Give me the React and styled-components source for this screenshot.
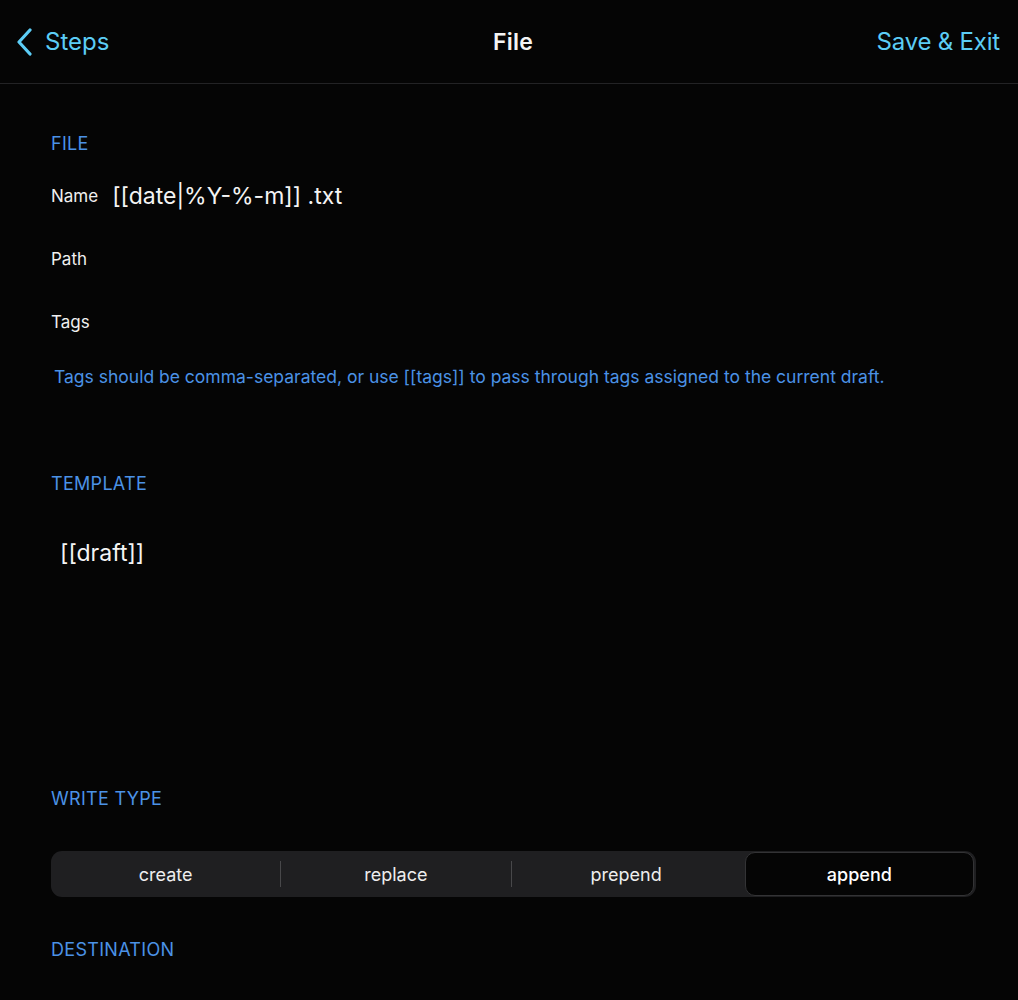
import React, { useState } from 'react'
import styled, { createGlobalStyle } from 'styled-components'

const GlobalStyle = createGlobalStyle`
  html, body {
    margin: 0;
    padding: 0;
    background: #050505;
  }
  body {
    font-family: Inter, "Noto Sans", "Liberation Sans", sans-serif;
    color: #f2f2f2;
  }
`

const Page = styled.div`
  width: 1018px;
  height: 1000px;
  background: #050505;
  overflow: hidden;
`

const NavBar = styled.div`
  height: 83px;
  border-bottom: 1px solid #232325;
  display: grid;
  grid-template-columns: 1fr auto 1fr;
  align-items: center;
  padding: 0 18px 0 16px;
`

const BackButton = styled.div`
  display: flex;
  align-items: center;
  gap: 11px;
  color: #5ccdf6;
  font-size: 24px;
`

const NavTitle = styled.div`
  font-size: 23px;
  font-weight: 600;
  color: #f4f4f4;
  letter-spacing: 0.2px;
  margin-left: 10px;
`

const NavAction = styled.div`
  justify-self: end;
  color: #5ccdf6;
  font-size: 24px;
  letter-spacing: -0.2px;
`

const Content = styled.div`
  padding: 50px 42px 0 51px;
`

const SectionLabel = styled.div`
  font-size: 18px;
  line-height: 20px;
  color: #4b92e6;
  letter-spacing: 0.3px;
  margin-top: ${({ gap }) => gap || 0}px;
`

const FieldRow = styled.div`
  height: 63px;
  display: flex;
  align-items: center;
  gap: 14px;
  margin-top: ${({ first }) => (first ? 10 : 0)}px;
`

const FieldLabel = styled.span`
  font-size: 17px;
  color: #f0f0f0;
`

const FieldValue = styled.span`
  font-size: 23px;
  color: #f4f4f4;
`

const HelpText = styled.div`
  font-size: 17.5px;
  line-height: 20px;
  color: #4b92e6;
  margin: 14px 0 0 3px;
  white-space: nowrap;
`

const TemplateBody = styled.div`
  font-size: 23px;
  line-height: 28px;
  color: #f4f4f4;
  margin: 45px 0 0 9px;
  height: 250px;
`

const Segmented = styled.div`
  margin-top: 42px;
  height: 46px;
  border-radius: 11px;
  background: #1f1f21;
  display: flex;
  align-items: stretch;
  padding: 1px 2px 1px 0;
  box-sizing: border-box;
`

const Segment = styled.div`
  flex: 1 1 0;
  display: flex;
  align-items: stretch;
  padding-left: ${({ active }) => (active ? 4 : 0)}px;
  cursor: pointer;
`

const SegmentPill = styled.div`
  flex: 1;
  display: flex;
  align-items: center;
  justify-content: center;
  font-size: 18px;
  color: #eeeeee;
  border-radius: 10px;
  ${({ active }) =>
    active &&
    `
    background: #050505;
    border: 1.5px solid #333335;
    font-weight: 500;
    color: #ffffff;
  `}
`

const Divider = styled.div`
  width: 1px;
  margin: 9px 0;
  background: ${({ hidden }) => (hidden ? 'transparent' : '#48484a')};
`

const Chevron = () => (
  <svg width="18" height="28" viewBox="0 0 18 28">
    <path d="M14 2 L3 14 L14 26" fill="none" stroke="#5ccdf6" strokeWidth="3.2" strokeLinecap="round" strokeLinejoin="round" />
  </svg>
)

const types = ['create', 'replace', 'prepend', 'append']

export default function App() {
  const [active, setActive] = useState('append')
  const activeIndex = types.indexOf(active)
  return (
    <Page>
      <GlobalStyle />
      <NavBar>
        <BackButton>
          <Chevron />
          Steps
        </BackButton>
        <NavTitle>File</NavTitle>
        <NavAction>Save &amp; Exit</NavAction>
      </NavBar>
      <Content>
        <SectionLabel>FILE</SectionLabel>
        <FieldRow first>
          <FieldLabel>Name</FieldLabel>
          <FieldValue>[[date|%Y-%-m]] .txt</FieldValue>
        </FieldRow>
        <FieldRow>
          <FieldLabel>Path</FieldLabel>
        </FieldRow>
        <FieldRow>
          <FieldLabel>Tags</FieldLabel>
        </FieldRow>
        <HelpText>
          Tags should be comma-separated, or use [[tags]] to pass through tags assigned to the current draft.
        </HelpText>

        <SectionLabel gap={87}>TEMPLATE</SectionLabel>
        <TemplateBody>[[draft]]</TemplateBody>

        <SectionLabel>WRITE TYPE</SectionLabel>
        <Segmented>
          {types.map((type, i) => (
            <React.Fragment key={type}>
              {i > 0 && <Divider hidden={i === activeIndex || i - 1 === activeIndex} />}
              <Segment active={active === type} onClick={() => setActive(type)}>
                <SegmentPill active={active === type}>{type}</SegmentPill>
              </Segment>
            </React.Fragment>
          ))}
        </Segmented>

        <SectionLabel gap={43}>DESTINATION</SectionLabel>
      </Content>
    </Page>
  )
}
